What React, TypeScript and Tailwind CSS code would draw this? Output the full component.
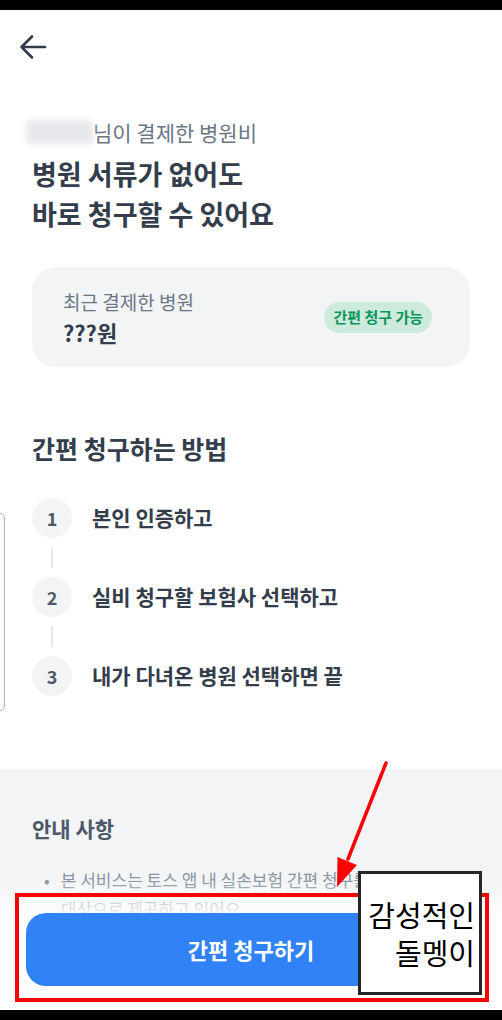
import React from 'react';

const STEPS = ['본인 인증하고', '실비 청구할 보험사 선택하고', '내가 다녀온 병원 선택하면 끝'];

const BackArrow = () => (
  <svg width="30" height="30" viewBox="0 0 30 30" fill="none">
    <path d="M3.5 15H27M14 4.5L3.5 15L14 25.5" stroke="#333d4b" strokeWidth="2.7" strokeLinecap="round" strokeLinejoin="round" />
  </svg>
);

const App: React.FC = () => {
  return (
    <div className="relative w-[502px] h-[1020px] overflow-hidden bg-white flex flex-col font-['Noto_Sans_CJK_KR',sans-serif] text-[#333d4b]">
      <div className="h-[10px] bg-black shrink-0" />

      {/* Header */}
      <header className="h-[74px] px-[18px] flex items-center shrink-0">
        <BackArrow />
      </header>

      <section className="px-[32px] shrink-0">
        <div className="mt-[34px] h-[28px] flex items-center">
          <span className="block -ml-[6px] w-[67px] h-[24px] bg-[#e6e8eb] blur-[3px] rounded-[4px]" />
          <span className="text-[21px] leading-[28px] text-[#6b7684]">님이 결제한 병원비</span>
        </div>
        <h1 className="mt-[8px] text-[27px] leading-[40px] font-bold">
          병원 서류가 없어도
          <br />
          바로 청구할 수 있어요
        </h1>

        {/* Recent hospital card */}
        <div className="mt-[33px] h-[100px] rounded-[24px] bg-[#f2f4f6] pl-[31px] pr-[38px] flex items-center justify-between">
          <div className="flex flex-col gap-[4px]">
            <span className="text-[19px] leading-[25px] text-[#6b7684]">최근 결제한 병원</span>
            <span className="text-[22px] leading-[28px] font-bold">???원</span>
          </div>
          <span className="h-[31px] px-[9px] rounded-full bg-[#cdeadc] text-[#07955a] text-[15px] font-bold flex items-center">
            간편 청구 가능
          </span>
        </div>

        <h2 className="mt-[65px] text-[25px] leading-[32px] font-bold">간편 청구하는 방법</h2>

        {/* Steps */}
        <ol className="mt-[34px] flex flex-col">
          {STEPS.map((s, i) => (
            <li key={s} className="flex flex-col">
              <div className="flex items-center gap-[20px]">
                <span className="w-[40px] h-[40px] rounded-full bg-[#f2f4f6] flex items-center justify-center text-[18px] font-semibold text-[#4e5968]">
                  {i + 1}
                </span>
                <span className="text-[21px] font-semibold">{s}</span>
              </div>
              {i < STEPS.length - 1 && (
                <span className="ml-[19px] my-[9px] w-[2px] h-[21px] bg-[#e5e8eb]" />
              )}
            </li>
          ))}
        </ol>
      </section>

      {/* Notice */}
      <section className="mt-[73px] flex-1 bg-[#f2f4f6] px-[32px] pt-[45px]">
        <h3 className="text-[21px] leading-[28px] font-bold text-[#4e5968]">안내 사항</h3>
        <div className="mt-[23px] flex gap-[11px] text-[17px] leading-[29px] text-[#8b95a1]">
          <span className="pl-[12px]">•</span>
          <p className="whitespace-nowrap">
            본 서비스는 토스 앱 내 실손보험 간편 청구를
            <br />
            대상으로 제공하고 있어요.
          </p>
        </div>
      </section>

      <div className="h-[10px] bg-black shrink-0" />

      {/* Bottom CTA */}
      <div className="absolute left-0 right-0 bottom-[10px]">
        <div className="h-[33px] bg-linear-to-b from-white/0 to-white/85" />
        <div className="bg-white px-[26px] pb-[24px]">
          <button className="w-full h-[73px] rounded-[20px] bg-[#3182f6] text-white text-[22px] font-semibold">
            간편 청구하기
          </button>
        </div>
      </div>

      {/* Left edge artifact */}
      <div className="absolute left-[-20px] top-[513px] w-[25px] h-[198px] border border-[#b4b4b4] rounded-[5px]" />

      {/* Annotation */}
      <div className="absolute left-[15px] top-[893px] w-[474px] h-[109px] border-[4px] border-[#ff0000]" />
      <svg className="absolute left-[320px] top-[755px]" width="80" height="140" viewBox="0 0 80 140" fill="none">
        <path d="M66 8L28 104" stroke="#ff0000" strokeWidth="3.5" strokeLinecap="round" />
        <path d="M17 132L37 110L17.5 102Z" fill="#ff0000" />
      </svg>
      <div className="absolute left-[358px] top-[871px] w-[124px] h-[124px] border-[3px] border-[#262626] bg-white flex flex-col items-end justify-center pr-[4px] text-[29px] leading-[38px] text-black">
        <span>감성적인</span>
        <span>돌멩이</span>
      </div>
    </div>
  );
};

export default App;
